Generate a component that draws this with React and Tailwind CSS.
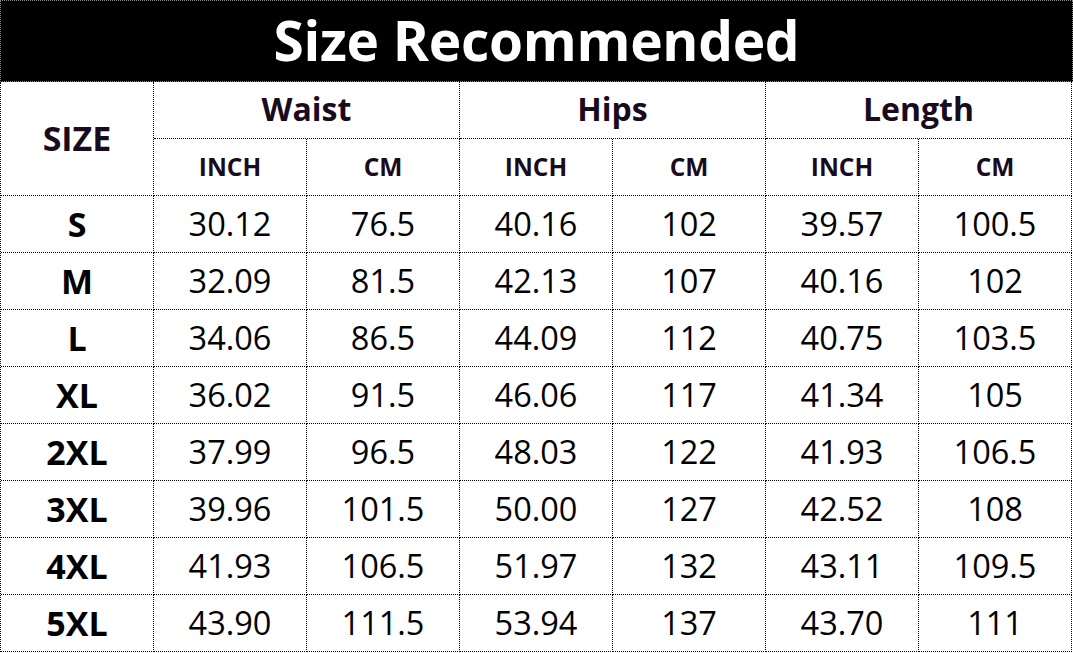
import React from 'react'

const rows = [
  ['S', '30.12', '76.5', '40.16', '102', '39.57', '100.5'],
  ['M', '32.09', '81.5', '42.13', '107', '40.16', '102'],
  ['L', '34.06', '86.5', '44.09', '112', '40.75', '103.5'],
  ['XL', '36.02', '91.5', '46.06', '117', '41.34', '105'],
  ['2XL', '37.99', '96.5', '48.03', '122', '41.93', '106.5'],
  ['3XL', '39.96', '101.5', '50.00', '127', '42.52', '108'],
  ['4XL', '41.93', '106.5', '51.97', '132', '43.11', '109.5'],
  ['5XL', '43.90', '111.5', '53.94', '137', '43.70', '111'],
]

const groups = ['Waist', 'Hips', 'Length']

const cell = 'flex items-center justify-center border-r border-b border-dotted border-black'

export default function App() {
  return (
    <div
      className="w-[1073px] h-[653px] bg-white overflow-hidden"
      style={{ fontFamily: '"Open Sans", "Noto Sans", sans-serif' }}
    >
      {/* Title bar */}
      <div className="h-[82px] bg-black border border-dotted border-[#888] flex items-center justify-center">
        <h1 className="text-white font-bold text-[55px] leading-none tracking-[-0.3px] mt-[-4px]">Size Recommended</h1>
      </div>

      {/* Table */}
      <div className="grid grid-cols-[repeat(7,153px)] grid-rows-[repeat(10,57px)] border-l border-dotted border-black">
        <div className={`${cell} row-span-2 text-[34px] font-bold text-[#1a0b1c]`}>SIZE</div>
        {groups.map((g) => (
          <div key={g} className={`${cell} col-span-2 text-[32px] font-bold text-[#1a0b1c] pb-[3px]`}>
            {g}
          </div>
        ))}
        {groups.map((g) => (
          <React.Fragment key={g + '-sub'}>
            <div className={`${cell} text-[24.5px] font-bold text-[#1a0b1c]`}>INCH</div>
            <div className={`${cell} text-[24.5px] font-bold text-[#1a0b1c]`}>CM</div>
          </React.Fragment>
        ))}
        {rows.map((r) => (
          <React.Fragment key={r[0]}>
            {r.map((v, i) => (
              <div
                key={i}
                className={`${cell} text-black ${i === 0 ? 'font-bold text-[34px]' : 'text-[32.5px]'}`}
              >
                {v}
              </div>
            ))}
          </React.Fragment>
        ))}
      </div>
    </div>
  )
}
